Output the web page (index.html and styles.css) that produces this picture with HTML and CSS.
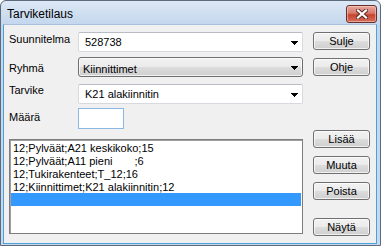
FILE: index.html
```html
<!DOCTYPE html>
<html lang="fi">
<head>
    <meta charset="UTF-8">
    <title>Tarviketilaus</title>
    <link rel="stylesheet" href="styles.css">
</head>
<body>
    <div class="window">
        <div class="titlebar">
            <span class="title">Tarviketilaus</span>
            <div class="close">
                <svg width="12" height="10" viewBox="0 0 12 10">
                    <path d="M2 1.5L10 8.5M10 1.5L2 8.5" stroke="#5a2620" stroke-width="4" stroke-linecap="square"/>
                    <path d="M2 1.5L10 8.5M10 1.5L2 8.5" stroke="#fff" stroke-width="2.2" stroke-linecap="square"/>
                </svg>
            </div>
        </div>

        <div class="client">
            <div class="main">
                <div class="row r1">
                    <label class="lbl">Suunnitelma</label>
                    <div class="combo edit">
                        <span class="val">528738</span>
                        <svg class="arrow" width="7" height="4" viewBox="0 0 7 4"><path d="M0 0H7V1H6V2H5V3H4V4H3V3H2V2H1V1H0Z"/></svg>
                    </div>
                </div>
                <div class="row r2">
                    <label class="lbl">Ryhmä</label>
                    <div class="combo drop">
                        <span class="val">Kiinnittimet</span>
                        <svg class="arrow" width="7" height="4" viewBox="0 0 7 4"><path d="M0 0H7V1H6V2H5V3H4V4H3V3H2V2H1V1H0Z"/></svg>
                    </div>
                </div>
                <div class="row r3">
                    <label class="lbl">Tarvike</label>
                    <div class="combo edit">
                        <span class="val">K21 alakiinnitin</span>
                        <svg class="arrow" width="7" height="4" viewBox="0 0 7 4"><path d="M0 0H7V1H6V2H5V3H4V4H3V3H2V2H1V1H0Z"/></svg>
                    </div>
                </div>
                <div class="row r4">
                    <label class="lbl">Määrä</label>
                    <div class="amount"></div>
                </div>

                <div class="list">
                    <div class="item">12;Pylväät;A21 keskikoko;15</div>
                    <div class="item">12;Pylväät;A11 pieni<span class="tab"></span>;6</div>
                    <div class="item">12;Tukirakenteet;T_12;16</div>
                    <div class="item">12;Kiinnittimet;K21 alakiinnitin;12</div>
                    <div class="item selected"></div>
                </div>
            </div>

            <div class="buttons">
                <div class="btn">Sulje</div>
                <div class="btn b-ohje">Ohje</div>
                <div class="btn b-lisaa">Lisää</div>
                <div class="btn b-muuta">Muuta</div>
                <div class="btn b-poista">Poista</div>
                <div class="btn b-nayta">Näytä</div>
            </div>
        </div>
    </div>
</body>
</html>
```

FILE: styles.css
```css
body {
    margin: 0;
    font-family: "Liberation Sans", Arial, sans-serif;
    font-size: 11px;
    color: #000;
    background: #fff;
}
.window {
    width: 381px;
    height: 246px;
    box-sizing: border-box;
    border: 1px solid #5e6a79;
    border-radius: 6px 6px 0 0;
    padding: 0 3px 1px 2px;
    display: flex;
    flex-direction: column;
    background: linear-gradient(to bottom, #dce8f5, #c3d6ed 24px, #c6d9ee);
}
.titlebar {
    height: 23px;
    display: flex;
    align-items: flex-start;
    justify-content: space-between;
    flex-shrink: 0;
}
.title {
    font-size: 12px;
    margin: 6px 0 0 4px;
    color: #000;
}
.close {
    width: 29px;
    height: 16px;
    margin-top: 4px;
    margin-right: 0;
    border: 1px solid #6b2d27;
    border-radius: 3px;
    background: linear-gradient(to bottom, #e8a99f, #d7786b 45%, #c7442f 55%, #d3705c);
    box-shadow: inset 0 0 0 1px rgba(255, 220, 210, 0.5);
    display: flex;
    align-items: center;
    justify-content: center;
}
.client {
    flex: 1;
    display: flex;
    background: #f0f0f0;
    border: 1px solid #4ba2da;
    border-top-color: #a6bfdc;
    padding: 7px 6px 0 5px;
}
.main {
    width: 294px;
    display: flex;
    flex-direction: column;
}
.row {
    display: flex;
    align-items: flex-start;
}
.lbl {
    width: 69px;
    flex-shrink: 0;
    line-height: 13px;
}
.r1 { height: 20px; }
.r1 .lbl { padding-top: 1px; }
.r2 { height: 20px; margin-top: 5px; }
.r2 .lbl { padding-top: 5px; }
.r3 { height: 20px; margin-top: 7px; }
.r3 .lbl { padding-top: 0; }
.r4 { height: 21px; margin-top: 4px; }
.r4 .lbl { padding-top: 3px; }

.combo {
    width: 225px;
    height: 100%;
    box-sizing: border-box;
    display: flex;
    align-items: center;
    justify-content: space-between;
    padding: 0 4px 0 6px;
}
.combo .val {
    line-height: 13px;
}
.combo .arrow {
    margin-top: 2px;
}
.edit {
    background: #fff;
    border: 1px solid #d6d9de;
    border-top-color: #b9bcc2;
    border-radius: 2px;
}
.drop {
    border: 1px solid #707070;
    border-radius: 3px;
    padding-left: 4px;
    background: linear-gradient(to bottom, #f2f2f2, #ebebeb 50%, #dddddd 50%, #cfcfcf);
    box-shadow: inset 0 0 0 1px rgba(255, 255, 255, 0.7);
}
.drop .val {
    margin-top: 4px;
}
.amount {
    width: 46px;
    height: 100%;
    box-sizing: border-box;
    background: #fff;
    border: 1px solid #8cb9e4;
}

.list {
    margin-top: 10px;
    height: 95px;
    box-sizing: border-box;
    background: #fff;
    border: 1px solid #7d7d7d;
    box-shadow: inset 1px 1px 0 #a0a0a0;
    padding: 1px 1px;
}
.item {
    height: 13px;
    line-height: 13px;
    padding: 1px 0 0 2px;
    box-sizing: border-box;
    white-space: nowrap;
}
.tab {
    display: inline-block;
    width: 22px;
}
.selected {
    background: #3399ff;
}

.buttons {
    width: 57px;
    margin-left: 10px;
    display: flex;
    flex-direction: column;
}
.btn {
    height: 18px;
    box-sizing: border-box;
    border: 1px solid #707070;
    border-radius: 3px;
    background: linear-gradient(to bottom, #f2f2f2, #ebebeb 50%, #dddddd 50%, #cfcfcf);
    box-shadow: inset 0 0 0 1px rgba(255, 255, 255, 0.7);
    display: flex;
    align-items: center;
    justify-content: center;
    line-height: 13px;
}
.b-ohje { margin-top: 8px; }
.b-lisaa { margin-top: 54px; }
.b-muuta { margin-top: 8px; }
.b-poista { margin-top: 8px; }
.b-nayta { margin-top: 18px; }
```
